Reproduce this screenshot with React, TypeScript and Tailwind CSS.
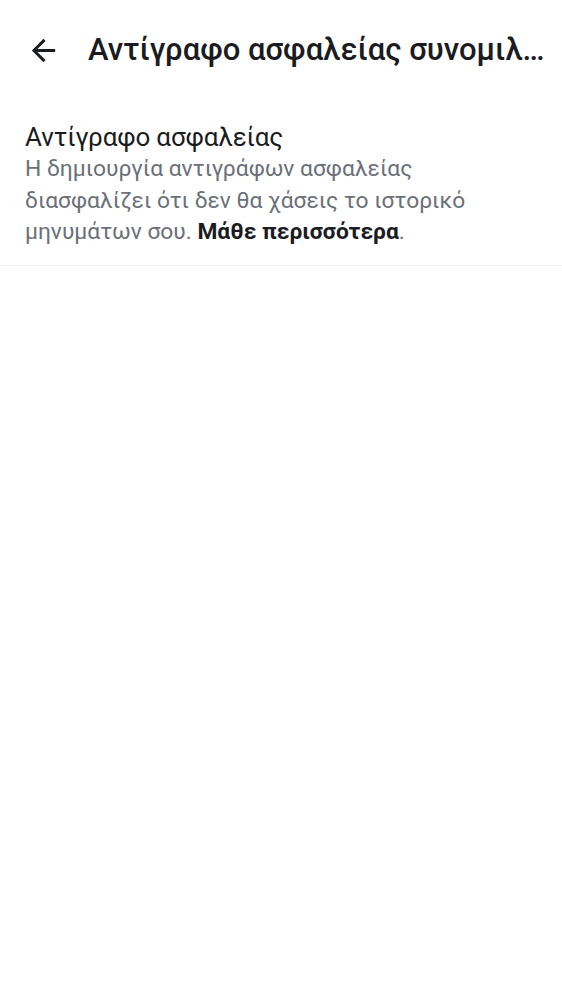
export default function App() {
  return (
    <div className="min-h-screen bg-white" style={{ fontFamily: "Roboto, 'Noto Sans', sans-serif" }}>
      <header className="flex h-[100px] items-center pl-[26px] pr-[14px]">
        <button className="mr-[27px] flex h-[35px] w-[35px] shrink-0 items-center justify-center text-[#1b1c1f]" aria-label="Πίσω">
          <svg viewBox="0 0 24 24" className="h-[35px] w-[35px]" fill="currentColor">
            <path d="M20 11H7.83l5.59-5.59L12 4l-8 8 8 8 1.41-1.41L7.83 13H20v-2z" />
          </svg>
        </button>
        <h1 className="truncate text-[31px] font-medium text-[#1b1c1f]">
          Αντίγραφο ασφαλείας συνομιλιών
        </h1>
      </header>
      <section className="border-b border-[#f0f0f2] px-[25px] pt-[21px] pb-[17px]">
        <h2 className="text-[26px] leading-[32px] tracking-[-0.15px] text-[#1b1c1f]">Αντίγραφο ασφαλείας</h2>
        <p className="text-[22.8px] leading-[31.5px] text-[#6b7079]">
          Η δημιουργία αντιγράφων ασφαλείας διασφαλίζει ότι δεν θα χάσεις το ιστορικό μηνυμάτων σου.{" "}
          <span className="font-bold text-[#1b1c1f]">Μάθε περισσότερα</span>.
        </p>
      </section>
    </div>
  );
}
